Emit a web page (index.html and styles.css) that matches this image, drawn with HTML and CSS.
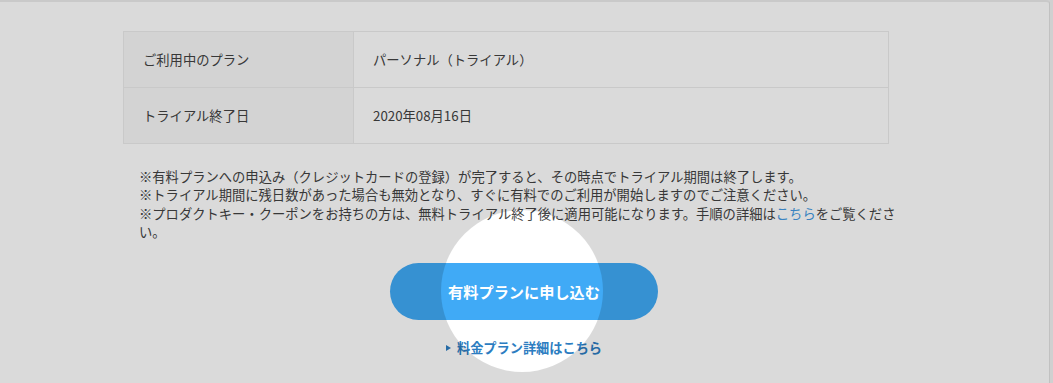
FILE: index.html
```html
<!DOCTYPE html>
<html lang="ja">
<head>
<meta charset="utf-8">
<title>プラン</title>
<link rel="stylesheet" href="styles.css">
</head>
<body>
<div class="frame">
  <div class="content">
    <table class="plan-table">
      <tr>
        <th>ご利用中のプラン</th>
        <td>パーソナル（トライアル）</td>
      </tr>
      <tr>
        <th>トライアル終了日</th>
        <td>2020年08月16日</td>
      </tr>
    </table>
    <ul class="notes">
      <li>※有料プランへの申込み（クレジットカードの登録）が完了すると、その時点でトライアル期間は終了します。</li>
      <li>※トライアル期間に残日数があった場合も無効となり、すぐに有料でのご利用が開始しますのでご注意ください。</li>
      <li>※プロダクトキー・クーポンをお持ちの方は、無料トライアル終了後に適用可能になります。手順の詳細は<a class="inline-link" href="#">こちら</a>をご覧くださ<br>い。</li>
    </ul>
  </div>
  <div class="actions">
    <a class="cta" href="#">有料プランに申し込む</a>
    <a class="more-link" href="#">料金プラン詳細はこちら</a>
  </div>
  <div class="spotlight"></div>
</div>
</body>
</html>
```

FILE: styles.css
```css
* { box-sizing: border-box; }

html, body {
  margin: 0;
  padding: 0;
  background: #f4f4f4;
  overflow: hidden;
}

body {
  font-family: "Noto Sans CJK JP", "Noto Sans", sans-serif;
  color: #424242;
  width: 1053px;
  height: 383px;
}

.frame {
  position: relative;
  width: 1050px;
  height: 383px;
  background: #ffffff;
  border-top: 2px solid #ececec;
  border-right: 1px solid #e2e2e2;
  border-top-right-radius: 4px;
}

.content {
  padding: 29px 0 0 123px;
}

.plan-table {
  width: 766px;
  border-collapse: collapse;
  font-size: 13.3px;
}

.plan-table th,
.plan-table td {
  height: 56px;
  padding: 0 19px;
  border: 1px solid #ebebeb;
  text-align: left;
  font-weight: normal;
  vertical-align: middle;
  line-height: 1;
}

.plan-table th {
  width: 230px;
  background: #f7f7f7;
}

.plan-table td {
  background: #ffffff;
}

.notes {
  list-style: none;
  margin: 24px 0 0 16px;
  padding: 0;
  width: 766px;
  font-size: 13.3px;
  line-height: 18.4px;
}

.notes li {
  margin: 0;
}

.inline-link {
  display: inline-block;
  line-height: 18.4px;
  height: 18.4px;
  color: #4499e2;
  text-decoration: none;
}

.actions {
  display: flex;
  flex-direction: column;
  align-items: center;
  width: 1048px;
  margin-top: 21px;
}

.cta {
  display: flex;
  align-items: center;
  justify-content: center;
  width: 268px;
  height: 57px;
  border-radius: 29px;
  background: #40aaf6;
  color: #ffffff;
  font-size: 15.2px;
  font-weight: bold;
  text-decoration: none;
}

.more-link {
  display: flex;
  align-items: center;
  margin-top: 19px;
  color: #2c7dc1;
  font-size: 13.2px;
  font-weight: bold;
  line-height: 18px;
  text-decoration: none;
}

.more-link::before {
  content: "";
  display: inline-block;
  width: 0;
  height: 0;
  border-top: 3.5px solid transparent;
  border-bottom: 3.5px solid transparent;
  border-left: 5px solid #2c7dc1;
  margin-right: 6px;
}

.spotlight {
  position: absolute;
  left: 441px;
  top: 208px;
  width: 162px;
  height: 162px;
  border-radius: 50%;
  box-shadow: 0 0 0 1500px rgba(0, 0, 0, 0.145);
  pointer-events: none;
}
```
